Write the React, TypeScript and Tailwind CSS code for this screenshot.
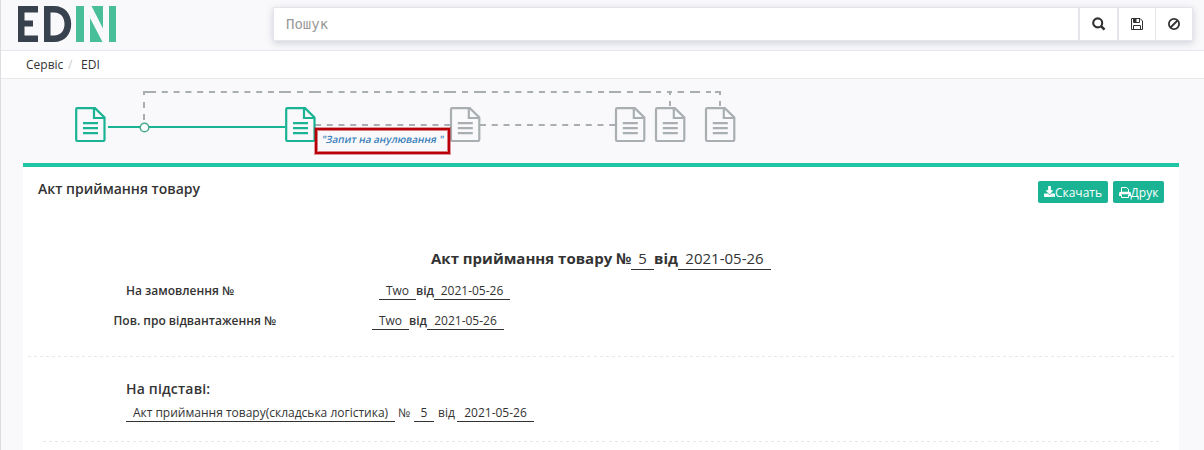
import type { ReactNode } from "react";
import { FaDownload } from "react-icons/fa";

const GREEN = "#1ab394";
const GREY = "#a9afb1";

function Logo() {
  return (
    <svg width="98" height="36" viewBox="0 0 98 36" className="block">
      <g fill="#38424f">
        <path d="M0 0H20V6.500H6.500V14.500H15V20.500H6.500V29.500H20V36H0Z" />
        <path fillRule="evenodd" d="M26 0H36C47 0 53.200 8 53.200 18S47 36 36 36H26ZM32.500 6.500V29.500H36C43 29.500 46.500 24.500 46.500 18S43 6.500 36 6.500Z" />
      </g>
      <g fill="#48bf98">
        <path d="M58 0H66V36H58Z" />
        <path d="M73.500 0H85V22.500Z" />
        <path d="M72 12L84.500 36H72Z" />
        <path d="M91 0H98V36H91Z" />
      </g>
    </svg>
  );
}

function SearchIcon() {
  return (
    <svg width="14" height="14" viewBox="0 0 14 14" fill="none" stroke="#333">
      <circle cx="5.700" cy="5.900" r="4.500" strokeWidth="2.100" />
      <path d="M9 9.200L12.500 12.700" strokeWidth="2.600" />
    </svg>
  );
}

function SaveIcon() {
  return (
    <svg width="12" height="12" viewBox="0 0 12 12" fill="none" stroke="#333">
      <path d="M.5.500H9L11.500 3V11.500H.5Z" />
      <path d="M2.500 11.500V7.500H9.500V11.500" />
      <path d="M2.500.500V4.500H8.500V.500" />
      <path d="M3 1H5.500V4H3Z" fill="#333" stroke="none" />
    </svg>
  );
}

function BanIcon() {
  return (
    <svg width="12" height="12" viewBox="0 0 12 12" fill="none" stroke="#333" strokeWidth="1.800">
      <circle cx="6" cy="6" r="5.100" />
      <path d="M2.500 9.500L9.500 2.500" />
    </svg>
  );
}

function PrinterIcon() {
  return (
    <svg width="12" height="11" viewBox="0 0 12 11" fill="none" stroke="#fff" className="mb-px shrink-0">
      <path d="M2.500 5V.500H7.500L9.500 2.300V5" />
      <path d="M0 9V6.500Q0 4.700 1.700 4.700H10.300Q12 4.700 12 6.500V9H10V7.300H2V9Z" fill="#fff" stroke="none" />
      <path d="M2.500 7.500V10.500H9.500V7.500" />
    </svg>
  );
}

function Doc({ x, color }: { x: number; color: string }) {
  return (
    <g transform={`translate(${x} 28)`} fill="none" stroke={color} strokeWidth="2.200">
      <path d="M2.300 1.200H20L29.500 10.500V32.800Q29.500 34 28.300 34H2.300Q1.200 34 1.200 32.800V2.300Q1.200 1.200 2.300 1.200Z" />
      <path d="M19 1V11H29.500" />
      <path d="M8 16.100H23M8 21.100H23M8 26.100H23" />
    </g>
  );
}

const tens = Array.from({ length: 10 }, (_, i) => i);
const topDashes: [number, number][] = [
  ...[144, 309, 474].flatMap((s): [number, number][] => [
    [s, 12],
    ...tens.map((i): [number, number] => [s + 17.8 + i * 11.8, 6]),
    [s + 135, 12],
    [s + 153, 6],
  ]),
  [639, 12], [656, 5], [667, 5], [677.5, 6.5], [690, 10], [706, 5], [715, 6],
];
const midDashes: [number, number][] = [315, 480].flatMap((s) =>
  Array.from({ length: 12 }, (_, i): [number, number] => [s + i * 11.75, 6]),
);

function Flow() {
  return (
    <div className="relative h-[84px]">
      <svg width="1203" height="84" viewBox="1 0 1203 84" className="block">
        <g fill={GREY}>
          {topDashes.map(([x, w]) => <rect key={x} x={x} y="12" width={w} height="2" />)}
          {midDashes.map(([x, w]) => <rect key={x} x={x} y="45" width={w} height="2" />)}
          <path d="M143 12h2v4h-2zM143 23h2v6h-2zM143 35h2v6h-2z" />
          <path d="M669 13h2v3h-2zM669 22h2v5h-2zM719 13h2v3h-2zM719 22h2v5h-2z" />
        </g>
        <path d="M108 48H285" stroke={GREEN} strokeWidth="2" />
        <circle cx="144.500" cy="48.500" r="4.300" fill="#fff" stroke="#4aa88f" strokeWidth="1.600" />
        <Doc x={75} color={GREEN} />
        <Doc x={285} color={GREEN} />
        {[450, 615, 655, 705].map((x) => <Doc key={x} x={x - 0.2} color={GREY} />)}
      </svg>
      <div className="absolute left-[314px] top-[49px] flex h-[26px] w-[135px] items-center justify-center border-2 border-[#b90009] pb-[3px] text-[10px] font-semibold whitespace-pre text-[#3a7fba] shadow-[0_0_0_1px_rgba(185,0,9,0.4),inset_0_0_0_1px_rgba(185,0,9,0.5)]">
        <span className="-skew-x-12">"Запит на анулювання "</span>
      </div>
    </div>
  );
}

function Under({ className, children }: { className: string; children: ReactNode }) {
  return <span className={`border-b border-[#333] text-center font-normal ${className}`}>{children}</span>;
}

function DashedRule({ className }: { className: string }) {
  return (
    <div className={`h-px bg-[repeating-linear-gradient(90deg,#e7e8ea_0_3px,transparent_3px_6.016px)] ${className}`} />
  );
}

export default function App() {
  return (
    <div className="h-[450px] overflow-hidden border-l border-[#dcdde0] bg-[#f9f9fb] font-['Open_Sans',sans-serif] text-[12px] text-[#333]">
      <header className="flex h-[51px] border-b border-[#e7e8ec]">
        <div className="ml-[17px] mt-1.5 w-[98px]"><Logo /></div>
        <div className="ml-[157px] mt-[7px] flex h-[34px] w-[920px] border border-[#e5e6e9] bg-white shadow-[0_2px_7px_rgba(80,85,120,0.25)]">
          <div className="flex w-[804px] items-center pl-3 font-['DejaVu_Sans_Mono',monospace] text-[14px] text-[#999]">Пошук</div>
          <button className="flex w-[39px] items-center justify-center border-l-2 border-[#e5e6e9]"><SearchIcon /></button>
          <button className="flex w-[38px] items-center justify-center border-l-2 border-[#e5e6e9] pr-px"><SaveIcon /></button>
          <button className="flex w-[37px] items-center justify-center border-l border-[#e5e6e9]"><BanIcon /></button>
        </div>
      </header>
      <nav className="flex h-7 items-center border-b border-[#e7e8ec] bg-white pl-[25px]">
        <span className="w-[42px]">Сервіс</span>
        <span className="w-[13px] text-[#ccc]">/</span>
        <span>EDI</span>
      </nav>
      <Flow />
      <main className="ml-[22px] h-[287px] w-[1156px] border-t-4 border-[#1fc5a5] bg-white">
        <div className="flex h-[72px] items-start justify-between pl-[15px] pr-[15px] pt-[14px]">
          <h1 className="text-[14px] leading-4 font-semibold">Акт приймання товару</h1>
          <div className="flex gap-[5px] text-white">
            <button className="flex h-[22px] w-[70px] items-center justify-center rounded-[2px] bg-[#1ab394] pt-px">
              <FaDownload size={11} className="mb-0.5 shrink-0" />Скачать
            </button>
            <button className="flex h-[22px] w-[51px] items-center justify-center rounded-[2px] bg-[#1ab394] pt-px">
              <PrinterIcon />Друк
            </button>
          </div>
        </div>
        <div className="flex h-[31px] pl-[408px] pt-[9px] text-[15px] leading-[21px] font-bold whitespace-nowrap">
          <span className="w-[200px]">Акт приймання товару №</span>
          <Under className="h-[22px] w-[23px]">5</Under>
          <span className="w-6">від</span>
          <Under className="h-[22px] w-[93px]">2021-05-26</Under>
        </div>
        <div className="flex h-[30px] items-end pl-[103px] leading-[19px] font-semibold">
          <span className="w-[253px]">На замовлення №</span>
          <Under className="h-5 w-[37px] leading-[21px]">Two</Under>
          <span className="w-[18px]">від</span>
          <Under className="h-5 w-[76px] leading-[21px]">2021-05-26</Under>
        </div>
        <div className="flex h-[30px] items-end pl-[90px] leading-[19px] font-semibold">
          <span className="w-[259px] pl-[0.5px]">Пов. про відвантаження №</span>
          <Under className="h-5 w-[37px] leading-[21px]">Two</Under>
          <span className="w-[18px]">від</span>
          <Under className="h-5 w-[77px] leading-[21px]">2021-05-26</Under>
        </div>
        <DashedRule className="mx-[5px] mt-[26px]" />
        <h2 className="ml-[103px] mt-[22px] text-[14px] leading-5 font-semibold tracking-[0.18px]">На підставі:</h2>
        <div className="ml-[103px] mt-[3px] flex h-5 leading-[21px] whitespace-nowrap">
          <Under className="w-[269px]">Акт приймання товару(складська логістика)</Under>
          <span className="w-[19px] pl-[3px]">№</span>
          <Under className="w-5">5</Under>
          <span className="w-[23px] pl-1">від</span>
          <Under className="w-[77px]">2021-05-26</Under>
        </div>
        <DashedRule className="mx-5 mt-[19px]" />
      </main>
    </div>
  );
}
